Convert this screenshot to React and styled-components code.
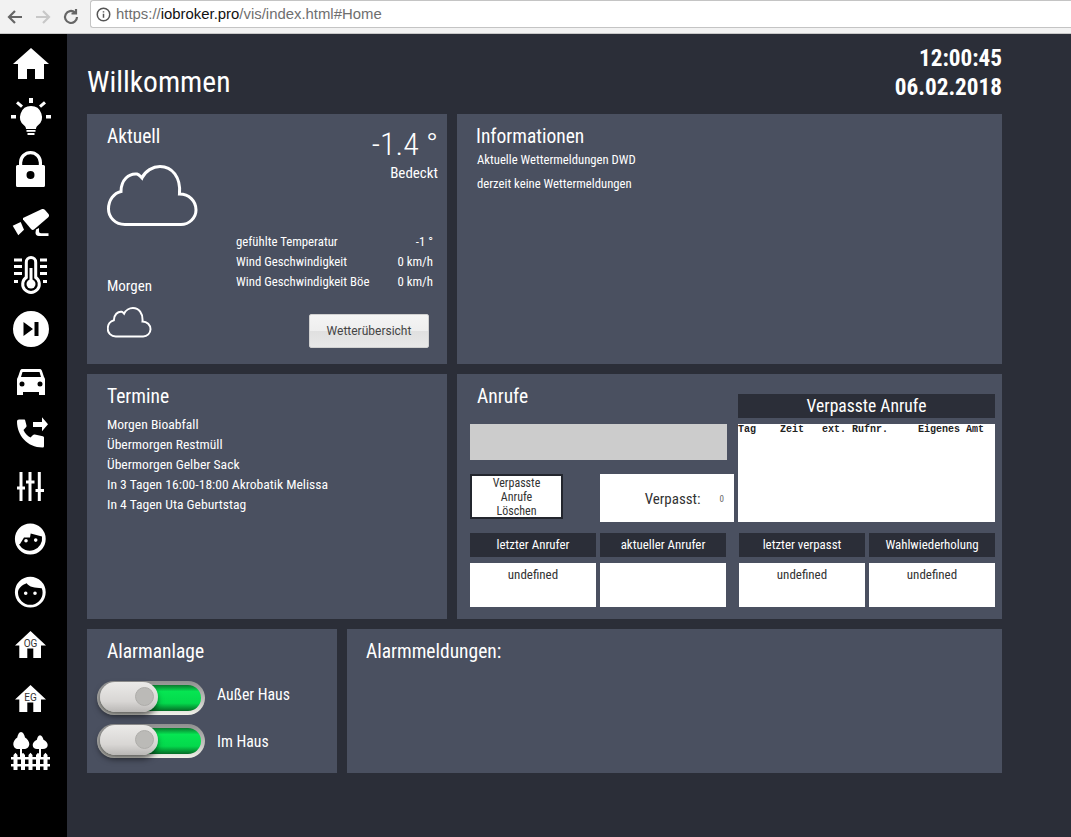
import React from "react"
import styled, { createGlobalStyle } from "styled-components"

const GlobalStyle = createGlobalStyle`
  html, body {
    margin: 0;
    padding: 0;
    background: #2b2e38;
  }
  * {
    box-sizing: border-box;
  }
`

const Page = styled.div`
  width: 1071px;
  height: 837px;
  overflow: hidden;
  display: flex;
  flex-direction: column;
  font-family: "Roboto", "Liberation Sans", sans-serif;
  font-stretch: 75%;
  color: #fff;
`

const BrowserBar = styled.div`
  height: 34px;
  flex: none;
  display: flex;
  align-items: center;
  padding-left: 6px;
  background: #f2f2f2;
  border-bottom: 1px solid #c8c8c8;
`

const NavIcon = styled.svg`
  width: 18px;
  height: 18px;
  margin-right: 10px;
  fill: none;
  stroke: ${props => props.color};
  stroke-width: 2.2;
  flex: none;
`

const InfoIcon = styled(NavIcon)`
  width: 15px;
  height: 15px;
  margin-right: 0;
  stroke-width: 1.8;
`

const AddressBar = styled.div`
  flex: 1;
  height: 28px;
  margin-top: -5px;
  display: flex;
  align-items: center;
  padding-left: 5px;
  gap: 5px;
  background: #fff;
  border: 1px solid #c4c4c4;
  border-right: none;
  border-radius: 3px 0 0 3px;
  font-family: "Liberation Sans", sans-serif;
  font-stretch: normal;
  font-size: 14.9px;
  color: #6f6f6f;
`

const Host = styled.span`
  color: #111;
`

const Body = styled.div`
  flex: 1;
  display: flex;
`

const Sidebar = styled.nav`
  width: 67px;
  flex: none;
  background: #000;
  padding: 2.5px 0 0 11px;
  display: flex;
  flex-direction: column;
`

const NavSlot = styled.div`
  width: 40px;
  height: 53.1px;
  display: flex;
  align-items: center;
  justify-content: center;
  flex: none;
`

const SideIcon = styled.svg`
  width: 40px;
  height: 40px;
  fill: #fff;
  overflow: visible;
`

const Main = styled.main`
  flex: 1;
  padding: 9px 69px 0 20px;
  display: flex;
  flex-direction: column;
  gap: 10px;
`

const Header = styled.header`
  height: 61px;
  display: flex;
  justify-content: space-between;
  align-items: flex-end;
`

const PageTitle = styled.h1`
  margin: 0 0 4px;
  font-size: 29.5px;
  font-weight: 400;
  line-height: 36px;
`

const Clock = styled.div`
  font-size: 23.2px;
  font-weight: 700;
  line-height: 29px;
  text-align: right;
  margin-bottom: 2px;
`

const Row = styled.div`
  display: flex;
  gap: 10px;
  height: ${props => props.$height}px;
`

const Card = styled.section`
  background: #4a5060;
  width: ${props => (props.$width ? `${props.$width}px` : "auto")};
  flex: ${props => (props.$width ? "none" : 1)};
  padding: ${props => props.$padding || "10px 20px"};
`

const CardTitle = styled.h2`
  margin: 0 0 -1px;
  padding-top: 1px;
  font-size: 19.5px;
  font-weight: 400;
  line-height: 24px;
`

const WeatherLayout = styled.div`
  display: flex;
  height: 100%;
`

const WeatherLeft = styled.div`
  width: 129px;
  flex: none;
  display: flex;
  flex-direction: column;
`

const BigCloud = styled.svg`
  width: 92px;
  height: 62px;
  margin-top: 17px;
  fill: none;
  stroke: #fff;
  stroke-width: 3;
`

const SmallCloud = styled.svg`
  width: 45px;
  height: 31px;
  margin-top: 11px;
  fill: none;
  stroke: #fff;
  stroke-width: 4;
`

const MorgenLabel = styled.div`
  margin-top: 49px;
  font-size: 15px;
  line-height: 20px;
`

const WeatherRight = styled.div`
  flex: 1;
  display: flex;
  flex-direction: column;
  margin-right: -11px;
`

const Temperature = styled.div`
  font-size: 32px;
  font-weight: 300;
  line-height: 40px;
  text-align: right;
`

const Condition = styled.div`
  font-size: 15px;
  line-height: 20px;
  margin-top: -1px;
  text-align: right;
`

const Details = styled.div`
  margin-top: 49px;
  padding-right: 5px;
  display: flex;
  flex-direction: column;
`

const DetailRow = styled.div`
  display: flex;
  justify-content: space-between;
  font-size: 12.8px;
  line-height: 20px;
`

const WeatherButton = styled.button`
  align-self: flex-end;
  margin: 22px 9px 0 0;
  width: 120px;
  height: 34px;
  border: 1px solid #d0d0d0;
  border-radius: 2px;
  background: linear-gradient(#f4f4f4 0%, #eeeeee 50%, #e0e0e0 51%, #e8e8e8 100%);
  color: #444;
  font-family: "Roboto", sans-serif;
  font-size: 12px;
  font-stretch: normal;
`

const InfoLine = styled.p`
  margin: 0;
  font-size: 12.7px;
  line-height: 24px;
  padding-left: 1px;
`

const TermList = styled.div`
  margin-top: 6px;
  display: flex;
  flex-direction: column;
`

const TermLine = styled.div`
  font-size: 13.6px;
  line-height: 20px;
`

const CallsTop = styled.div`
  display: flex;
  gap: 4px;
`

const CallsLeft = styled.div`
  width: 264px;
  flex: none;
`

const CallsTitle = styled(CardTitle)`
  margin-left: 7px;
`

const CallsRight = styled.div`
  width: 257px;
  flex: none;
  margin-top: 10px;
  display: flex;
  flex-direction: column;
`

const GreyBox = styled.div`
  width: 257px;
  height: 36px;
  margin-top: 16px;
  background: #cccccc;
`

const ActionRow = styled.div`
  display: flex;
  justify-content: space-between;
  margin-top: 14px;
`

const ClearButton = styled.button`
  width: 93px;
  height: 45px;
  padding: 0;
  border: 2px solid #23262e;
  background: #fff;
  color: #333;
  font-family: inherit;
  font-stretch: inherit;
  font-size: 12px;
  line-height: 14px;
`

const MissedBox = styled.div`
  width: 134px;
  height: 48px;
  background: #fff;
  color: #333;
  display: flex;
  align-items: center;
  justify-content: flex-end;
  padding: 2px 10px 0 0;
  font-size: 15px;
`

const MissedCount = styled.span`
  font-size: 9px;
  margin-left: 19px;
  color: #666;
`

const DarkHeader = styled.div`
  height: 24px;
  background: #2b2e38;
  display: flex;
  align-items: center;
  justify-content: center;
  padding-bottom: ${props => (props.$size ? 0 : 2)}px;
  font-size: ${props => props.$size || 12.9}px;
`

const CallTable = styled.div`
  height: 98px;
  margin-top: 6px;
  background: #fff;
  color: #222;
  font-family: "Liberation Mono", monospace;
  font-stretch: normal;
  font-weight: 700;
  font-size: 10px;
  line-height: 11px;
  white-space: pre;
`

const CallsBottom = styled.div`
  display: flex;
  gap: 13px;
  margin-top: 11px;
`

const CallGroup = styled.div`
  width: 256px;
  display: grid;
  grid-template-columns: 126px 126px;
  column-gap: 4px;
  row-gap: 6px;
`

const ValueBox = styled.div`
  height: 44px;
  background: #fff;
  color: #333;
  text-align: center;
  font-size: 13px;
  line-height: 24px;
`

const SwitchList = styled.div`
  margin-top: 18px;
`

const SwitchRow = styled.div`
  display: flex;
  align-items: center;
  gap: 12px;
  height: 34px;
  margin-bottom: 9px;
  margin-left: -10px;
`

const SwitchLabel = styled.span`
  font-size: 15.8px;
  margin-bottom: ${props => props.$lift || 0}px;
`

const Track = styled.div`
  position: relative;
  width: 108px;
  height: 34px;
  border-radius: 17px;
  padding: 4px;
  background: linear-gradient(#8f8f8f, #c4c4c0 60%, #f2f2ea);
  flex: none;
`

const TrackFill = styled.div`
  height: 100%;
  border-radius: 13px;
  background: linear-gradient(#0a7a2e, #06e552 25%, #04d94c 70%, #056b26);
`

const Knob = styled.div`
  position: absolute;
  top: 1px;
  left: 3px;
  width: 58px;
  height: 30px;
  border-radius: 15px;
  background: linear-gradient(#ebeae8, #d8d6d4 65%, #b9b7b5);
  box-shadow: -1px 4px 6px rgba(0, 0, 0, 0.6);
`

const KnobDot = styled.div`
  position: absolute;
  top: 5px;
  right: 4px;
  width: 19px;
  height: 19px;
  border-radius: 50%;
  background: #bbbab7;
  border: 1px solid #aeadaa;
`

const HouseTag = styled.text`
  font-family: "Roboto", sans-serif;
  font-stretch: normal;
  font-size: 10px;
  fill: #333;
`

const facePath =
  "M19.300 2.600a15.400 15.400 0 1 1 0 30.800 15.400 15.400 0 0 1 0-30.800zM9 23l4-6.600h6l.7-4L31 15.500A12.400 12.400 0 0 1 8 23.500zM15 18a1.800 1.800 0 1 0 0 3.600 1.800 1.800 0 0 0 0-3.600zM24.700 17.300a1.800 1.800 0 1 0 0 3.600 1.800 1.800 0 0 0 0-3.600z"

const boyPath =
  "M19.300 2.800a15.400 15.400 0 1 1 0 30.800 15.400 15.400 0 0 1 0-30.800zM15.700 9.300C11 11 7 14.500 7 18.500a12.300 12.300 0 0 0 24.600 0c0-1.500-.3-3-.9-4.200C24 14 18 13 15.700 9.300zM14.700 17.500a1.800 1.800 0 1 0 0 3.600 1.800 1.800 0 0 0 0-3.600zM24 17.500a1.800 1.800 0 1 0 0 3.600 1.800 1.800 0 0 0 0-3.600z"

const floorHouse = "M19.500 4L35 18.500h-5V31h-7.700v-9.500h-6V31H8.300V18.500H4z"

const icons = [
  <path key="home" d="M20 5L38 21h-5v15h-9V26h-8v10H7V21H2z" />,
  <g key="bulb">
    <path d="M20 10a11 11 0 0 1 6.800 19.600c-1.300 1.100-1.800 2.300-1.800 3.400H15c0-1.100-.5-2.300-1.800-3.400A11 11 0 0 1 20 10z" />
    <rect x="15.500" y="34" width="9" height="1.800" />
    <rect x="16.500" y="37" width="7" height="2" />
    <rect x="18" y="2" width="4" height="5" />
    <rect x="0" y="19" width="5" height="3.500" />
    <rect x="35" y="19" width="5" height="3.500" />
    <path d="M5 7.500l2-2.200 5 4.200-2 2.200zM35 7.500l-2-2.200-5 4.200 2 2.200z" />
  </g>,
  <path
    key="lock"
    fillRule="evenodd"
    d="M8 16v-2.500a11.500 11.500 0 0 1 23 0V16h1.500a1.500 1.500 0 0 1 1.500 1.500v19a1.500 1.500 0 0 1-1.500 1.500h-26A1.500 1.500 0 0 1 5 36.500v-19A1.500 1.500 0 0 1 6.500 16zm3.200 0h16.600v-2.500a8.300 8.300 0 0 0-16.600 0zM19.500 22a4 4 0 1 0 0 8 4 4 0 0 0 0-8z"
  />,
  <g key="camera">
    <path d="M12 16L30 7.500c2-.7 3-.5 4 .5l3.500 4c1 1.500.5 2.500-.5 3.500L23 27.500c-1 .8-2 .5-3-.5l-8-9.500z" />
    <path d="M1.700 23.700l8-3.700 3.300 7.700-5.700 5.600z" />
    <path d="M25 27.500l3-1.500v3c0 1.500.8 2.200 2 2.200h7.500V34H28c-2.500 0-3.500-1.500-3.500-3.500z" />
  </g>,
  <g key="thermo">
    <path
      fillRule="evenodd"
      d="M20 1a6.200 6.200 0 0 1 6.200 6.200v14.300a9.800 9.800 0 1 1-12.400 0V7.200A6.200 6.200 0 0 1 20 1zm0 3a3.200 3.200 0 0 0-3.200 3.200v16a6.800 6.800 0 1 0 6.400 0v-16A3.200 3.200 0 0 0 20 4z"
    />
    <rect x="18.500" y="13" width="3" height="15" />
    <circle cx="20" cy="29" r="4.500" />
    <rect x="3" y="3.500" width="8" height="3" />
    <rect x="29" y="3.500" width="7" height="3" />
    <rect x="3" y="10" width="8" height="3" />
    <rect x="29" y="10" width="7" height="3" />
    <rect x="3" y="17" width="8" height="3" />
    <rect x="29" y="17" width="7" height="3" />
    <rect x="3" y="25" width="4" height="3" />
    <rect x="32" y="25" width="4" height="3" />
  </g>,
  <path
    key="skip"
    fillRule="evenodd"
    d="M20 2a18 18 0 1 1 0 36 18 18 0 0 1 0-36zm-7.500 11v14l9.500-7zm11 0v14h4V13z"
  />,
  <path
    key="car"
    fillRule="evenodd"
    d="M11.500 7h17c1.200 0 2 .6 2.400 1.700L33 15c.7.7 1 1.500 1 2.500V33h-6v-3H12v3H6V17.500c0-1 .3-1.800 1-2.500l2.100-6.300C9.500 7.600 10.300 7 11.500 7zm0 3L10 15h20l-1.500-5zM11 19.500a2.500 2.500 0 1 0 0 5 2.500 2.500 0 0 0 0-5zm18 0a2.500 2.500 0 1 0 0 5 2.500 2.500 0 0 0 0-5z"
  />,
  <g key="phone">
    <path d="M8 4.500h5c.8 0 1 .4 1.200 1l1.300 5c.2.8 0 1.300-.5 1.800L12.500 15c1.500 3.500 4 6 7 7.500l2.500-2.500c.5-.5 1-.7 1.800-.5l8 1.800c.7.2 1.200.6 1.200 1.400V31c0 1-.6 1.500-1.500 1.500C16 32.500 6 20 6 6.500c0-1.200.8-2 2-2z" />
    <path d="M22 7h9V2.300l6 7-6 7V12h-9z" />
  </g>,
  <g key="mixer">
    <rect x="8.500" y="4" width="3" height="29" />
    <rect x="6" y="18.500" width="8" height="3" />
    <rect x="17.500" y="4" width="3" height="29" />
    <rect x="15" y="12.500" width="8.500" height="3" />
    <rect x="26.800" y="4" width="3" height="29" />
    <rect x="24.500" y="21" width="8.500" height="3" />
  </g>,
  <path key="face1" fillRule="evenodd" d={facePath} />,
  <path key="face2" fillRule="evenodd" d={boyPath} />,
  <g key="og">
    <path d={floorHouse} />
    <HouseTag x="19.500" y="19.700" textAnchor="middle">OG</HouseTag>
  </g>,
  <g key="eg" transform="translate(0 1)">
    <path d={floorHouse} />
    <HouseTag x="19.500" y="19.700" textAnchor="middle">EG</HouseTag>
  </g>,
  <g key="garden">
    <path d="M10 -1c2 0 3.500 3 4 5.500 2.500 1.500 4.300 4 4.300 6.500 0 3-2.500 5-5.300 5h-6C4.500 16 2.300 14 2.300 11c0-2.500 1.700-5 4-6.500C6.800 2 8 -1 10 -1z" />
    <path d="M29 2.300c1.800 0 3 2.500 3.500 4.500 2.400 1.200 4.200 3 4.200 5.200 0 2.400-2.200 4-4.700 4h-6c-2.500 0-4.300-1.600-4.300-4 0-2.200 1.800-4 4.200-5.200.4-2 1.300-4.500 3.100-4.500z" />
    <rect x="9" y="15" width="2" height="9" />
    <rect x="28" y="15" width="2" height="9" />
    <path d="M2.500 22l2-2.300 2 2.300v15h-4zM10 22l2-2.300 2 2.300v15h-4zM17.500 22l2-2.300 2 2.300v15h-4zM25 22l2-2.300 2 2.300v15h-4zM32.500 22l2-2.300 2 2.300v15h-4z" />
    <rect x="0" y="24" width="39" height="2.500" />
    <rect x="0" y="31" width="39" height="2.500" />
  </g>,
]

const cloudPath =
  "M18 59.500C8 59.500 1.500 52 1.500 44 1.500 35 7 28 14 26.500 14 15 22 8 30 9c2 .5 3 2 5 4 3-7 11-11.500 18-11.500C65 1.500 74 12 72.500 29 82 29 89 36 89 45c0 8-7 14.500-15 14.500z"

const calls = [
  { label: "letzter Anrufer", value: "undefined" },
  { label: "aktueller Anrufer", value: "" },
]

const missed = [
  { label: "letzter verpasst", value: "undefined" },
  { label: "Wahlwiederholung", value: "undefined" },
]

const terms = [
  "Morgen Bioabfall",
  "Übermorgen Restmüll",
  "Übermorgen Gelber Sack",
  "In 3 Tagen 16:00-18:00 Akrobatik Melissa",
  "In 4 Tagen Uta Geburtstag",
]

const details = [
  ["gefühlte Temperatur", "-1 °"],
  ["Wind Geschwindigkeit", "0 km/h"],
  ["Wind Geschwindigkeit Böe", "0 km/h"],
]

function CallCells({ items }) {
  return (
    <CallGroup>
      {items.map(item => (
        <DarkHeader key={item.label}>{item.label}</DarkHeader>
      ))}
      {items.map(item => (
        <ValueBox key={item.label}>{item.value}</ValueBox>
      ))}
    </CallGroup>
  )
}

function AlarmSwitch({ label, lift }) {
  return (
    <SwitchRow>
      <Track>
        <TrackFill />
        <Knob>
          <KnobDot />
        </Knob>
      </Track>
      <SwitchLabel $lift={lift}>{label}</SwitchLabel>
    </SwitchRow>
  )
}

export default function App() {
  return (
    <Page>
      <GlobalStyle />
      <BrowserBar>
        <NavIcon viewBox="0 0 18 18" color="#666">
          <path d="M16 9H3M9 3L3 9l6 6" />
        </NavIcon>
        <NavIcon viewBox="0 0 18 18" color="#c8c8c8">
          <path d="M2 9h13M9 3l6 6-6 6" />
        </NavIcon>
        <NavIcon viewBox="0 0 18 18" color="#666">
          <path d="M15 9a6 6 0 1 1-2-4.500M14 1v4.500H9.500" />
        </NavIcon>
        <AddressBar>
          <InfoIcon viewBox="0 0 18 18" color="#555">
            <circle cx="9" cy="9" r="7.500" />
            <path d="M9 8v5M9 5v1.500" />
          </InfoIcon>
          <span>
            https://<Host>iobroker.pro</Host>/vis/index.html#Home
          </span>
        </AddressBar>
      </BrowserBar>
      <Body>
        <Sidebar>
          {icons.map(icon => (
            <NavSlot key={icon.key}>
              <SideIcon viewBox="0 0 40 40">{icon}</SideIcon>
            </NavSlot>
          ))}
        </Sidebar>
        <Main>
          <Header>
            <PageTitle>Willkommen</PageTitle>
            <Clock>
              12:00:45
              <br />
              06.02.2018
            </Clock>
          </Header>
          <Row $height={250}>
            <Card $width={360}>
              <WeatherLayout>
                <WeatherLeft>
                  <CardTitle>Aktuell</CardTitle>
                  <BigCloud viewBox="0 0 92 62">
                    <path d={cloudPath} />
                  </BigCloud>
                  <MorgenLabel>Morgen</MorgenLabel>
                  <SmallCloud viewBox="0 0 92 62">
                    <path d={cloudPath} />
                  </SmallCloud>
                </WeatherLeft>
                <WeatherRight>
                  <Temperature>-1.4 °</Temperature>
                  <Condition>Bedeckt</Condition>
                  <Details>
                    {details.map(([name, value]) => (
                      <DetailRow key={name}>
                        <span>{name}</span>
                        <span>{value}</span>
                      </DetailRow>
                    ))}
                  </Details>
                  <WeatherButton>Wetterübersicht</WeatherButton>
                </WeatherRight>
              </WeatherLayout>
            </Card>
            <Card $padding="10px 19px">
              <CardTitle>Informationen</CardTitle>
              <InfoLine>Aktuelle Wettermeldungen DWD</InfoLine>
              <InfoLine>derzeit keine Wettermeldungen</InfoLine>
            </Card>
          </Row>
          <Row $height={245}>
            <Card $width={360}>
              <CardTitle>Termine</CardTitle>
              <TermList>
                {terms.map(term => (
                  <TermLine key={term}>{term}</TermLine>
                ))}
              </TermList>
            </Card>
            <Card $padding="10px 7px 0 13px">
              <CallsTop>
                <CallsLeft>
                  <CallsTitle>Anrufe</CallsTitle>
                  <GreyBox />
                  <ActionRow>
                    <ClearButton>
                      Verpasste
                      <br />
                      Anrufe
                      <br />
                      Löschen
                    </ClearButton>
                    <MissedBox>
                      Verpasst:
                      <MissedCount>0</MissedCount>
                    </MissedBox>
                  </ActionRow>
                </CallsLeft>
                <CallsRight>
                  <DarkHeader $size={17.6}>Verpasste Anrufe</DarkHeader>
                  <CallTable>{"Tag    Zeit   ext. Rufnr.     Eigenes Amt"}</CallTable>
                </CallsRight>
              </CallsTop>
              <CallsBottom>
                <CallCells items={calls} />
                <CallCells items={missed} />
              </CallsBottom>
            </Card>
          </Row>
          <Row $height={144}>
            <Card $width={250}>
              <CardTitle>Alarmanlage</CardTitle>
              <SwitchList>
                <AlarmSwitch label="Außer Haus" lift={8} />
                <AlarmSwitch label="Im Haus" />
              </SwitchList>
            </Card>
            <Card $padding="10px 19px">
              <CardTitle>Alarmmeldungen:</CardTitle>
            </Card>
          </Row>
        </Main>
      </Body>
    </Page>
  )
}
